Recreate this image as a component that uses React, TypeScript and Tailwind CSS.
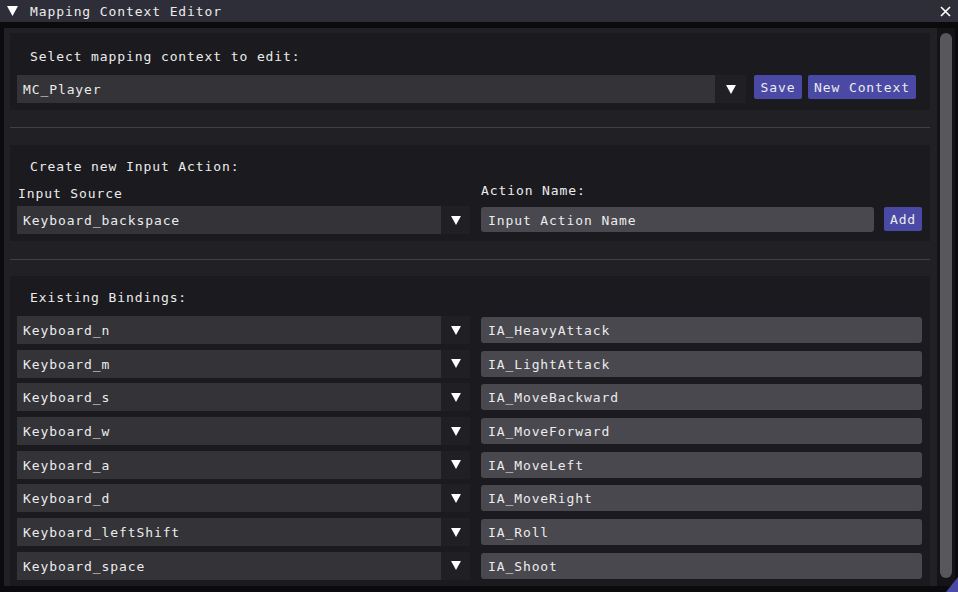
import React from "react";

const bindings: [string, string][] = [
  ["Keyboard_n", "IA_HeavyAttack"],
  ["Keyboard_m", "IA_LightAttack"],
  ["Keyboard_s", "IA_MoveBackward"],
  ["Keyboard_w", "IA_MoveForward"],
  ["Keyboard_a", "IA_MoveLeft"],
  ["Keyboard_d", "IA_MoveRight"],
  ["Keyboard_leftShift", "IA_Roll"],
  ["Keyboard_space", "IA_Shoot"],
];

function DownArrow({ w = 11, h = 10 }: { w?: number; h?: number }) {
  return (
    <svg width={w} height={h} viewBox="0 0 11 10">
      <polygon points="0,0 11,0 5.5,10" fill="#ffffff" />
    </svg>
  );
}

function Combo({ value, width }: { value: string; width: number }) {
  return (
    <div className="flex h-[28px]">
      <div className="h-full bg-[#333338] flex items-center pl-[6px] pt-[2px]" style={{ width }}>
        {value}
      </div>
      <div className="w-[29px] h-full bg-[#1f1f24] flex items-center justify-center">
        <DownArrow w={10} h={9} />
      </div>
    </div>
  );
}

function Button({ label, className = "" }: { label: string; className?: string }) {
  return (
    <div className={"h-[24px] bg-[#4a4aa6] rounded-[2px] flex items-center justify-center px-[6px] pt-[2px] " + className}>
      {label}
    </div>
  );
}

export default function App() {
  return (
    <div className="relative w-[958px] h-[592px] bg-[#0b0b0d] flex flex-col overflow-hidden text-[13px] leading-[16px] tracking-[0.9px] text-[#ececec] font-['DejaVu_Sans_Mono',monospace]">
      {/* title bar */}
      <div className="h-[22px] bg-[#2e2e38] flex items-center pl-[7px] pr-[7px]">
        <DownArrow />
        <span className="ml-[12px] pt-[2px]">Mapping Context Editor</span>
        <svg className="ml-auto" width="11" height="11" viewBox="0 0 11 11">
          <path d="M1 1 L10 10 M10 1 L1 10" stroke="#ffffff" strokeWidth="1.6" />
        </svg>
      </div>

      <div className="flex pt-[6px] pl-[4px] h-[564px]">
        <div className="w-[933px] h-[558px] bg-[#202025] pt-[5px] pl-[6px] pr-[7px] flex flex-col">
          {/* select context */}
          <div className="h-[77px] bg-[#1b1b1f] pl-[7px] pt-[16px]">
            <div className="pl-[13px]">Select mapping context to edit:</div>
            <div className="mt-[10px] flex items-start">
              <div className="flex h-[28px]">
                <div className="w-[698px] h-full bg-[#333338] flex items-center pl-[6px] pt-[2px]">MC_Player</div>
                <div className="w-[31px] h-full bg-[#1f1f24] flex items-center justify-center">
                  <DownArrow w={10} h={9} />
                </div>
              </div>
              <Button label="Save" className="ml-[8px] w-[48px]" />
              <Button label="New Context" className="ml-[6px] w-[108px]" />
            </div>
          </div>

          <div className="mt-[17px] h-px bg-[#3f3f47]" />

          {/* create new input action */}
          <div className="mt-[17px] h-[96px] bg-[#1b1b1f] pl-[7px] pr-[8px] pt-[14px]">
            <div className="pl-[13px]">Create new Input Action:</div>
            <div className="flex">
              <div className="mt-[11px]">
                <div className="pl-[1px]">Input Source</div>
                <div className="mt-[4px]">
                  <Combo value="Keyboard_backspace" width={424} />
                </div>
              </div>
              <div className="ml-[11px] mt-[8px] flex-1">
                <div>Action Name:</div>
                <div className="mt-[8px] flex items-start">
                  <div className="flex-1 h-[25px] bg-[#48484e] rounded-[3px] flex items-center pl-[7px] pt-[2px]">
                    Input Action Name
                  </div>
                  <Button label="Add" className="ml-[10px] w-[38px] h-[23px]" />
                </div>
              </div>
            </div>
          </div>

          <div className="mt-[18px] h-px bg-[#3f3f47]" />

          {/* existing bindings */}
          <div className="mt-[16px] flex-1 bg-[#1b1b1f] pl-[7px] pr-[8px] pt-[14px]">
            <div className="pl-[13px]">Existing Bindings:</div>
            <div className="mt-[10px] flex flex-col gap-[5.7px]">
              {bindings.map(([key, action]) => (
                <div key={key} className="flex items-center">
                  <Combo value={key} width={424} />
                  <div className="ml-[11px] flex-1 h-[26px] bg-[#48484e] rounded-[3px] flex items-center pl-[7px] pt-[2px]">
                    {action}
                  </div>
                </div>
              ))}
            </div>
          </div>
        </div>

        {/* scrollbar */}
        <div className="w-[18px] h-[558px] bg-[#141417] px-[3px] pt-[5px] pb-[8px] flex">
          <div className="flex-1 rounded-full bg-[#58585c]" />
        </div>
      </div>

      {/* resize grip */}
      <svg className="absolute right-0 bottom-0" width="12" height="15" viewBox="0 0 12 15">
        <polygon points="12,0 12,15 0,15" fill="#4a4aa6" />
      </svg>
    </div>
  );
}
